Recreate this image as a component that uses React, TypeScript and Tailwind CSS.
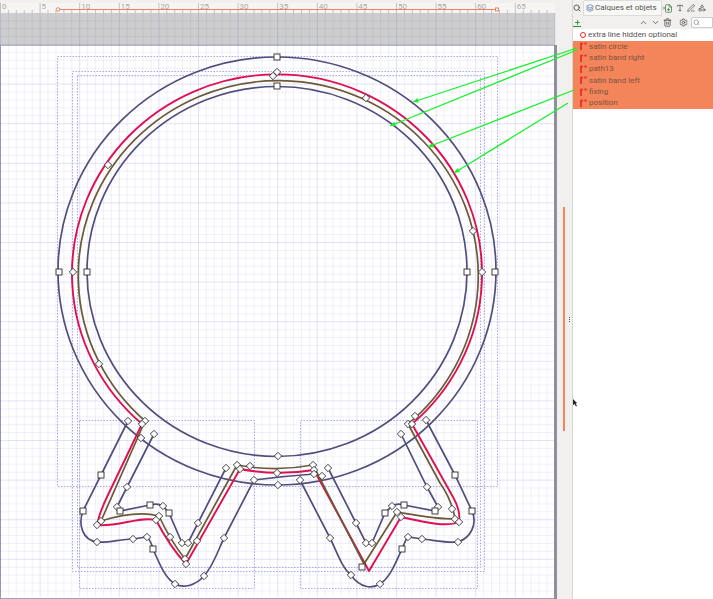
import { ChevronDown, ChevronUp, FilePlus, Layers, PenLine, Plus, Search, Settings, Shapes, Trash2, Type, X } from "lucide-react";

const rulerLabels = [0, 5, 10, 15, 20, 25, 30, 35, 40, 45, 50, 55, 60, 65, 70];
const layerRows = ["satin circle", "satin band right", "path13", "satin band left", "fixing", "position"];

const UNIT = 7.92;
const gridX = Array.from({ length: 71 }, (_, i) => i * UNIT + 0.5);
// first horizontal line sits in the grey band, the page starts a few lines further down
const gridY = Array.from({ length: 74 }, (_, i) => 44.5 + (i - 3) * UNIT);

const squares = [
  [277, 57], [277, 86], [59, 272], [495, 272], [87, 272], [467, 272],
  [101, 475], [83, 511], [120, 511], [150, 505], [169, 513], [153, 549],
  [362, 567], [385, 513], [404, 505], [435, 511], [472, 511], [455, 475], [402, 549],
];

const diamonds = [
  [277, 72], [273, 76], [366, 98], [108, 165], [473, 231], [73, 272], [482, 272], [99, 364],
  [278, 456], [277, 473], [278, 485],
  [128, 421], [145, 421], [142, 424], [141, 438], [154, 434], [127, 487], [117, 507],
  [163, 506], [101, 521], [97, 525], [159, 516], [156, 520], [170, 537], [182, 543], [188, 543],
  [198, 523], [185, 559], [186, 564], [197, 541], [226, 468], [237, 465], [240, 469], [250, 466],
  [254, 480], [224, 538], [204, 576], [175, 584], [147, 537], [133, 539], [97, 542],
  [313, 465], [314, 470], [314, 474], [322, 476], [328, 468], [300, 480], [356, 523], [366, 543],
  [372, 543], [392, 506], [397, 512], [401, 517], [438, 507], [427, 487], [452, 509], [455, 519],
  [459, 522], [408, 424], [412, 424], [415, 416], [401, 434], [426, 420], [458, 542], [422, 539],
  [408, 537], [380, 584], [351, 575], [330, 538],
];

const boxes = [
  [57, 56, 440, 430], [72, 71, 412, 500], [77, 75, 403, 492], [79, 420, 175, 168], [300, 420, 177, 168],
];

const blue = [
  "M128 421 L101 475 L83 511 C78 524 82 540 97 542 C110 543 120 539 133 539 L147 537 C150 540 152 545 153 549 C160 565 165 578 175 584 C184 589 196 585 204 576 C214 565 219 548 224 538 L254 480 Q285 476 314 474",
  "M300 480 L330 538 C337 552 342 568 351 575 C360 588 372 589 380 584 C390 578 396 562 402 549 C404 545 405 540 408 537 L422 539 C433 540 446 543 458 542 C470 538 478 525 472 511 L455 475 L426 420",
  "M154 434 L127 487 L117 507 L120 511 L150 505 Q158 503 163 506 L169 513 L182 543 Q185 545 188 543 L198 523 L226 468",
  "M328 468 L356 523 L366 543 Q369 545 372 543 L385 513 L392 506 Q397 503 404 505 L435 511 L438 507 L427 487 L401 434",
];
const red =
  "M142 424 A205 199.5 0 1 1 412 424 L453 497 Q461 511 459 522 C445 528 420 521 401 517 L369 571 L314 470 A205 199.5 0 0 1 240 469 L186 564 Q170 547 156 520 C140 516 118 527 97 525 Q99 514 107 497 L142 424";
const brown =
  "M145 421 A200 195 0 1 1 408 424 L440 483 Q452 500 455 519 C435 519 415 515 397 512 L364 564 L313 465 A200 195 0 0 1 237 465 L185 559 Q170 540 159 516 C140 511 120 515 101 521 L145 421";

const arrows = [
  [577, 48, 413, 102],
  [577, 50, 390, 126],
  [574, 90, 428, 147],
  [568, 103, 454, 173],
];

function PathIcon() {
  return (
    <svg width="7" height="8" viewBox="0 0 7 8" className="shrink-0">
      <path d="M1 8 V1.5 H3" fill="none" stroke="#ee2222" strokeWidth="1.6" />
      <rect x="4.5" y="0.5" width="2" height="2" fill="#ee2222" />
    </svg>
  );
}

export default function App() {
  return (
    <div className="relative flex h-[599px] w-[713px] overflow-hidden bg-[#f1f0ee] font-['Roboto','Noto_Sans',sans-serif]">
      {/* Canvas column */}
      <div className="flex w-[555px] flex-col">
        <div className="mt-[3px] flex h-[10px] bg-[#f6f5f3]">
          {rulerLabels.map((n) => (
            <div key={n} className="w-[39.6px] shrink-0 pl-[2px] text-[8px] leading-[8px] text-[#a9a9a7]">
              {n}
            </div>
          ))}
        </div>
        <div className="h-[32px] bg-[#cdcdcd]" />
        <div className="flex-1 border-b border-l border-t border-b-[#a9a9c0] border-l-[#a6a6bc] border-t-[#b4b4c4] bg-white" />
      </div>

      {/* Scroll column */}
      <div className="relative w-[18px] border-r border-[#d6d6d4] bg-[#f1f0ee]">
        <div className="absolute left-[8px] top-[207px] h-[224px] w-[2px] bg-[#f4845a]" />
        <div className="absolute left-[14px] top-[317px] h-[5px] border-l border-dotted border-[#555]" />
      </div>

      {/* Layers panel */}
      <div className="flex min-w-0 flex-1 flex-col">
        <div className="flex h-[16px] items-center">
          <Search size={8} strokeWidth={2.5} className="shrink-0 text-[#444]" />
          <div className="ml-[2px] flex h-[16px] w-[79px] shrink-0 items-center gap-[1px] rounded-t-[2px] border border-[#dcdcda] bg-[#f8f8f6] pl-[2px] text-[8px] whitespace-nowrap text-[#555]">
            <Layers size={8} className="shrink-0 text-[#3a6ea5]" />
            <span>Calques et objets</span>
            <X size={6} className="ml-[3px] shrink-0 text-[#666]" />
          </div>
          <div className="ml-[2px] flex items-center gap-[3px] text-[#444]">
            <FilePlus size={9} className="shrink-0 text-[#3f7d3f]" />
            <Type size={8} className="shrink-0" />
            <PenLine size={8} className="shrink-0" />
            <Shapes size={8} className="shrink-0" />
          </div>
        </div>
        <div className="flex h-[13px] items-center bg-[#f1f0ee] text-[#444]">
          <div className="flex w-[8px] shrink-0 flex-col items-center border-b border-[#2d8a2d]">
            <Plus size={7} strokeWidth={3} className="text-[#2d8a2d]" />
          </div>
          <ChevronUp size={9} className="ml-[58px] shrink-0" />
          <ChevronDown size={9} className="ml-[3px] shrink-0" />
          <Trash2 size={9} className="ml-[3px] shrink-0" />
          <Settings size={9} className="ml-[7px] shrink-0" />
          <div className="ml-[3px] flex h-[11px] flex-1 items-center rounded-l-[2px] border border-[#ccc] bg-white pl-[1px]">
            <Search size={7} className="text-[#777]" />
          </div>
        </div>
        <div className="flex-1 bg-white text-[8px] leading-[11.4px]">
          <div className="flex h-[11.5px] items-center gap-[2px] pl-[7px] whitespace-nowrap text-[#55534f]">
            <div className="h-[6px] w-[6px] shrink-0 rounded-full border-[1.5px] border-[#ee2222]" />
            extra line hidden optional
          </div>
          <div className="bg-[#f4845a]">
            {layerRows.map((row) => (
              <div key={row} className="flex h-[11.4px] items-center gap-[2px] pl-[7px] whitespace-nowrap text-[#7d5440]">
                <PathIcon />
                {row}
              </div>
            ))}
          </div>
        </div>
      </div>

      {/* Drawing over the canvas */}
      <svg className="pointer-events-none absolute left-0 top-0" width="713" height="599" viewBox="0 0 713 599" fill="none">
        <g strokeWidth="1" stroke="#3c3cd8">
          {gridX.map((x, i) => (
            <line key={i} x1={x} y1={13} x2={x} y2={597} strokeOpacity={i % 5 === 0 ? 0.14 : 0.07} />
          ))}
          {gridY.map((y, i) => (
            <line key={i} x1={0} y1={y} x2={554} y2={y} strokeOpacity={(i - 3) % 5 === 0 ? 0.14 : 0.07} />
          ))}
        </g>
        <rect x="554" y="45" width="3" height="554" fill="#8f8f9d" />
        <g stroke="#c2c2c0" strokeWidth="1">
          {Array.from({ length: 70 }, (_, k) => (
            <line key={k} x1={k * UNIT + 0.5} y1={k % 5 === 0 ? 3 : 10} x2={k * UNIT + 0.5} y2={13} />
          ))}
        </g>
        <line x1="58" y1="9.5" x2="497" y2="9.5" stroke="#e8835a" strokeWidth="1" />
        <circle cx="58" cy="9.5" r="1.8" fill="white" stroke="#e8835a" />
        <rect x="495.5" y="8" width="3" height="3" fill="white" stroke="#e8835a" />

        <g stroke="#a9a9e6" strokeWidth="1" strokeDasharray="1.5 1.5">
          {boxes.map(([x, y, w, h], i) => (
            <rect key={i} x={x + 0.5} y={y + 0.5} width={w} height={h} />
          ))}
        </g>

        <ellipse cx="277" cy="271" rx="219" ry="214" stroke="#524e7c" strokeWidth="1.7" />
        <ellipse cx="277" cy="271.5" rx="190" ry="185" stroke="#524e7c" strokeWidth="1.7" />
        {blue.map((d, i) => (
          <path key={i} d={d} stroke="#524e7c" strokeWidth="1.7" />
        ))}
        <path d={red} stroke="#e0104f" strokeWidth="1.9" strokeLinejoin="round" />
        <path d={brown} stroke="#6b5a35" strokeWidth="1.7" strokeLinejoin="round" />

        {arrows.map(([x1, y1, x2, y2], i) => {
          const a = Math.atan2(y2 - y1, x2 - x1);
          const p = (t: number) => `${x2 - 6 * Math.cos(a + t)},${y2 - 6 * Math.sin(a + t)}`;
          return (
            <g key={i}>
              <line x1={x1} y1={y1} x2={x2} y2={y2} stroke="#1bf02e" strokeWidth="1.3" />
              <polygon points={`${x2},${y2} ${p(0.4)} ${p(-0.4)}`} fill="#1bf02e" />
            </g>
          );
        })}

        <g fill="white" stroke="#2e2e2e" strokeWidth="0.9">
          {diamonds.map(([x, y], i) => (
            <polygon key={i} points={`${x},${y - 3.7} ${x + 3.7},${y} ${x},${y + 3.7} ${x - 3.7},${y}`} />
          ))}
          {squares.map(([x, y], i) => (
            <rect key={i} x={x - 3} y={y - 3} width="6" height="6" />
          ))}
        </g>
        <path d="M573 399 L573 405 L574.5 404 L576 406.5 L577 406 L575.6 403.6 L577.2 403.2 Z" fill="#222" />
      </svg>
    </div>
  );
}
